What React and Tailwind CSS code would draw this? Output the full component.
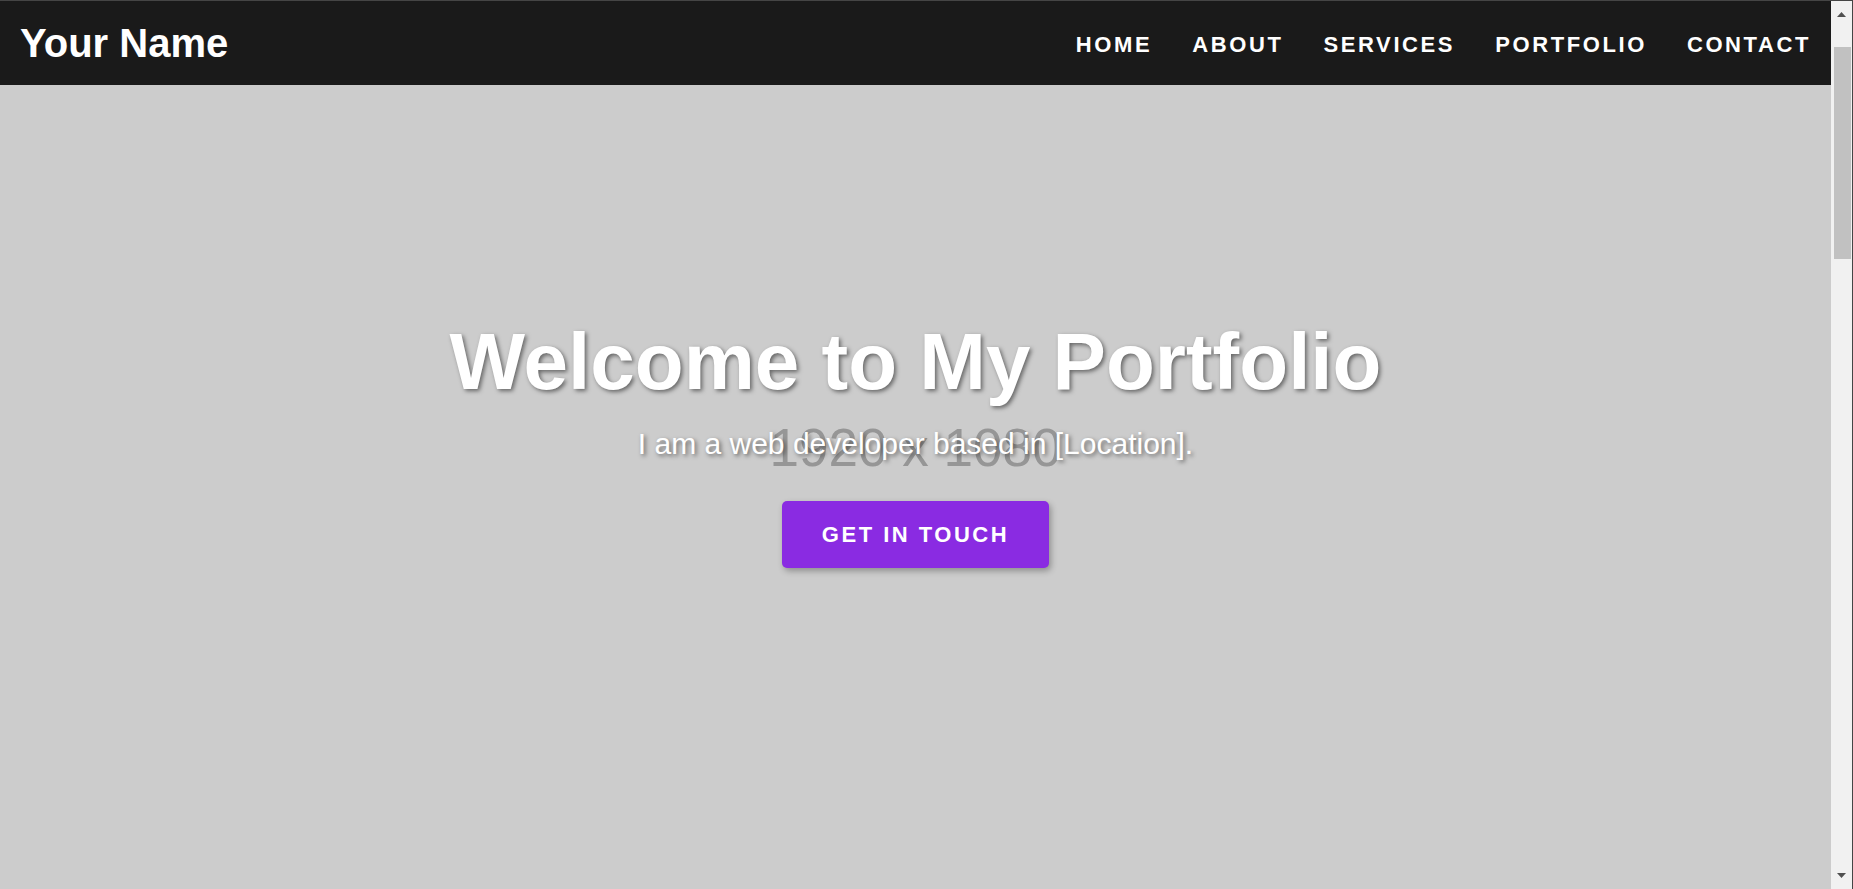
import React from 'react';

const links = ['Home', 'About', 'Services', 'Portfolio', 'Contact'];

function Scrollbar() {
  return (
    <div className="w-[21px] shrink-0 bg-[#f1f1f1] flex flex-col items-center">
      <div className="h-[26px] flex items-center justify-center">
        <svg width="9" height="5" viewBox="0 0 9 5">
          <path d="M0 5 L4.5 0 L9 5 Z" fill="#505050" />
        </svg>
      </div>
      <div className="mt-[20px] ml-[1px] w-[17px] h-[212px] bg-[#c1c1c1]" />
      <div className="flex-1" />
      <div className="h-[16px] flex items-start justify-center">
        <svg width="9" height="5" viewBox="0 0 9 5">
          <path d="M0 0 L9 0 L4.5 5 Z" fill="#505050" />
        </svg>
      </div>
    </div>
  );
}

export default function App() {
  return (
    <div
      className="h-screen flex overflow-hidden border-t border-r border-[#454545]"
      style={{ fontFamily: '"Liberation Sans", Arial, sans-serif' }}
    >
      <div className="relative flex-1 grid bg-[#cccccc]">
        {/* placeholder image text */}
        <div className="col-start-1 row-start-1 flex items-center justify-center pt-[6px]">
          <span className="text-[53px] text-[#969696]">1920 x 1080</span>
        </div>

        {/* hero content */}
        <div className="col-start-1 row-start-1 flex flex-col items-center justify-center pb-[6px]">
          <h1 className="text-[80px] font-bold text-white leading-[1.15] [text-shadow:2px_2px_4px_rgba(0,0,0,0.5)]">
            Welcome to My Portfolio
          </h1>
          <p className="mt-[19px] text-[30px] text-white leading-[1.15] [text-shadow:2px_2px_4px_rgba(0,0,0,0.5)]">
            I am a web developer based in [Location].
          </p>
          <button className="mt-10 px-10 py-[21px] bg-[#8a2be2] text-white text-[22px] leading-[1.15] font-bold uppercase tracking-[2.5px] rounded-[5px] shadow-[2px_3px_6px_rgba(0,0,0,0.3)]">
            Get in Touch
          </button>
        </div>

        {/* fixed header */}
        <header className="absolute top-0 inset-x-0 h-[84px] bg-[#1a1a1a] px-5 flex items-center justify-between">
          <div className="text-[40px] font-bold text-white leading-[1.15]">Your Name</div>
          <nav className="flex items-center gap-10 mt-1">
            {links.map((l) => (
              <a
                key={l}
                href="#"
                className="text-[22px] font-bold text-white uppercase tracking-[2.6px] leading-[1.15]"
              >
                {l}
              </a>
            ))}
          </nav>
        </header>
      </div>
      <Scrollbar />
    </div>
  );
}
